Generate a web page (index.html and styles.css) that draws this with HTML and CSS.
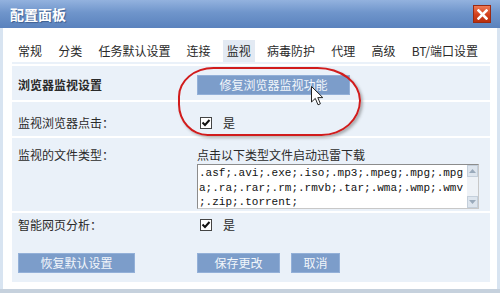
FILE: index.html
```html
<!DOCTYPE html>
<html>
    <head>
        <title>配置面板</title>
        <meta charset="utf-8">
        <link rel="stylesheet" href="styles.css">
    </head>
    <body>
        <div class='window'>
            <div class='titlebar'>
                <span class='title'>配置面板</span>
                <span class='close'>
                    <svg width='11' height='11' viewBox='0 0 11 11'>
                        <path d='M1.5 1.5 L9.5 9.5 M9.5 1.5 L1.5 9.5' stroke='#fff' stroke-width='2.6' stroke-linecap='square'/>
                    </svg>
                </span>
            </div>
            <div class='frame'>
                <ul class='tabs'>
                    <li>常规</li>
                    <li>分类</li>
                    <li>任务默认设置</li>
                    <li>连接</li>
                    <li class='active'>监视</li>
                    <li>病毒防护</li>
                    <li>代理</li>
                    <li>高级</li>
                    <li>BT/端口设置</li>
                </ul>
                <div class='panel'>
                    <div class='row first'>
                        <div class='label bold'>浏览器监视设置</div>
                        <div class='value'>
                            <span class='button wide'>修复浏览器监视功能</span>
                        </div>
                    </div>
                    <div class='row second'>
                        <div class='label'>监视浏览器点击：</div>
                        <div class='value'>
                            <span class='check'>
                                <svg width='12' height='12' viewBox='0 0 12 12'>
                                    <rect x='0.5' y='0.5' width='11' height='11' fill='#fff' stroke='#444'/>
                                    <path d='M2.5 5.5 L5 8 L9.5 3' fill='none' stroke='#111' stroke-width='2'/>
                                </svg>
                            </span>
                            <span>是</span>
                        </div>
                    </div>
                    <div class='row third'>
                        <div class='label'>监视的文件类型：</div>
                        <div class='value column'>
                            <div class='caption'>点击以下类型文件启动迅雷下载</div>
                            <div class='textbox'>
                                <div class='textbox-text'>.asf;.avi;.exe;.iso;.mp3;.mpeg;.mpg;.mpga;.ra;.rar;.rm;.rmvb;.tar;.wma;.wmp;.wmv;.zip;.torrent;</div>
                                <div class='scrollbar'>
                                    <span class='arrow up'>
                                        <svg width='7' height='4' viewBox='0 0 7 4'><path d='M0 4 L3.5 0 L7 4 Z' fill='#9aaabb'/></svg>
                                    </span>
                                    <span class='track'></span>
                                    <span class='arrow down'>
                                        <svg width='7' height='4' viewBox='0 0 7 4'><path d='M0 0 L3.5 4 L7 0 Z' fill='#9aaabb'/></svg>
                                    </span>
                                </div>
                            </div>
                        </div>
                    </div>
                    <div class='row fourth'>
                        <div class='label'>智能网页分析：</div>
                        <div class='value'>
                            <span class='check'>
                                <svg width='12' height='12' viewBox='0 0 12 12'>
                                    <rect x='0.5' y='0.5' width='11' height='11' fill='#fff' stroke='#444'/>
                                    <path d='M2.5 5.5 L5 8 L9.5 3' fill='none' stroke='#111' stroke-width='2'/>
                                </svg>
                            </span>
                            <span>是</span>
                        </div>
                    </div>
                    <div class='row actions'>
                        <div class='label'>
                            <span class='button reset'>恢复默认设置</span>
                        </div>
                        <div class='value'>
                            <span class='button save'>保存更改</span>
                            <span class='button cancel'>取消</span>
                        </div>
                    </div>
                </div>
            </div>
            <div class='bottom'></div>

            <!-- annotation drawn over the screenshot -->
            <div class='mark'></div>
            <svg class='cursor' width='13' height='20' viewBox='0 0 13 20'>
                <path d='M0.5 0.5 L0.5 16 L4.3 12.4 L7 18.8 L9.4 17.8 L6.8 11.6 L11.8 11.6 Z' fill='#fff' stroke='#222' stroke-width='1' stroke-linejoin='round'/>
            </svg>
        </div>
    </body>
</html>
```

FILE: styles.css
```css
* {
    margin: 0;
    padding: 0;
    box-sizing: border-box;
}

body {
    width: 500px;
    height: 293px;
    overflow: hidden;
    background: #fff;
    color: #2a2a2a;
    font-family: "Noto Sans CJK SC", "Liberation Sans", sans-serif;
    font-size: 12px;
}

.window {
    position: relative;
    width: 500px;
    height: 293px;
}

.titlebar {
    height: 28px;
    display: flex;
    align-items: center;
    justify-content: space-between;
    padding: 0 10px 0 10px;
    background: linear-gradient(#93b2de, #6f95cb 45%, #5a82bd);
}

.title {
    color: #fff;
    font-weight: 700;
    font-size: 14px;
    line-height: 16px;
    text-shadow: 1px 1px 1px #3e5f90;
}

.close {
    width: 18px;
    height: 18px;
    display: flex;
    align-items: center;
    justify-content: center;
    margin-right: -1px;
    background: linear-gradient(#ef7a55, #d2401d 55%, #b8300f);
    border: 1px solid #9b2a12;
}

.frame {
    height: 261px;
    border-left: 3px solid #d8e4f1;
    border-right: 3px solid #d8e4f1;
    background: #fff;
}

.bottom {
    height: 4px;
    background: #c6d1dd;
}

.tabs {
    list-style: none;
    display: flex;
    justify-content: space-between;
    padding: 12px 19px 0 15px;
    height: 34px;
}

.tabs li {
    line-height: 22px;
    height: 22px;
    padding: 0 4px;
    margin: 0 -4px;
    font-size: 12px;
}

.tabs li.active {
    background: #e3eaf3;
}

.panel {
    height: 220px;
    margin: 0 7px 0 9px;
    padding: 2px 6px 0 6px;
    background: #eaf1f9;
}

.row {
    display: flex;
    align-items: center;
    border-top: 2px solid #fff;
    margin: 0 -6px;
    padding-left: 6px;
    line-height: 16px;
}

.label {
    width: 179px;
    flex-shrink: 0;
}

.bold {
    font-weight: 700;
}

.value {
    display: flex;
    align-items: center;
}

.first {
    padding-top: 9px;
    padding-bottom: 5px;
}

.second {
    padding-top: 13px;
    padding-bottom: 5px;
}

.third {
    align-items: flex-start;
    padding-top: 9px;
    padding-bottom: 2px;
}

.fourth {
    padding-top: 4px;
}

.actions {
    border-top: none;
    padding-top: 20px;
}

.column {
    flex-direction: column;
    align-items: flex-start;
}

.check {
    display: flex;
    margin: 0 11px 0 3px;
}

.button {
    display: inline-block;
    height: 20px;
    line-height: 18px;
    text-align: center;
    color: #f2f6fb;
    background: #7c9dca;
    border: 1px solid #93b0d8;
}

.wide {
    width: 153px;
}

.reset {
    width: 117px;
}

.save {
    width: 83px;
}

.cancel {
    width: 49px;
    margin-left: 11px;
}

.caption {
    height: 17px;
    line-height: 16px;
}

.textbox {
    display: flex;
    width: 282px;
    height: 45px;
    background: #fff;
    border: 1px solid #8c8c8c;
    border-right-color: #c8c8c8;
    border-bottom-color: #c8c8c8;
}

.textbox-text {
    width: 269px;
    padding: 1px 0 0 1px;
    font-family: "Liberation Mono", monospace;
    font-size: 11px;
    line-height: 14.5px;
    color: #111;
    word-break: break-all;
    line-break: anywhere;
    overflow: hidden;
}

.scrollbar {
    width: 11px;
    display: flex;
    flex-direction: column;
    background: #eef2f7;
}

.arrow {
    height: 12px;
    display: flex;
    align-items: center;
    justify-content: center;
    background: #dde5ee;
    border: 1px solid #c4cfdb;
}

.track {
    flex: 1;
}

.mark {
    position: absolute;
    left: 178px;
    top: 67px;
    width: 183px;
    height: 69px;
    border: 2px solid #d11c1c;
    border-radius: 36px 44px 40px 30px / 30px 34px 36px 32px;
    box-shadow: 2px 2px 3px rgba(90, 90, 90, 0.45);
}

.cursor {
    position: absolute;
    left: 311px;
    top: 86px;
}
```
